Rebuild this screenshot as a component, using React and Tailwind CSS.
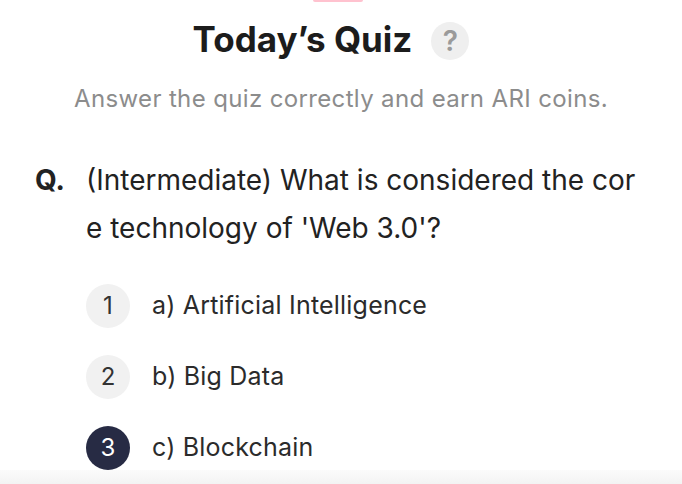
import React from 'react';

const options = [
  { n: 1, label: 'a) Artificial Intelligence' },
  { n: 2, label: 'b) Big Data' },
  { n: 3, label: 'c) Blockchain', active: true },
];

export default function App() {
  return (
    <div className="w-[682px] h-[484px] bg-white flex flex-col overflow-hidden font-['Inter',sans-serif]">
      <div className="self-center ml-[-6px] w-[50px] h-[2px] rounded-b-full bg-[#ffc2cf]" />

      {/* header */}
      <div className="flex items-center justify-center gap-[19px] mt-[16px] mr-[20px]">
        <h1 className="text-[35px] leading-[40px] font-bold text-[#1c1c1c]">Today’s Quiz</h1>
        <div className="w-[38px] h-[38px] rounded-full bg-[#efefef] flex items-center justify-center text-[28px] font-semibold text-[#9a9a9a] mt-[4px]">?</div>
      </div>
      <p className="mt-[24px] text-center text-[24px] leading-[30px] text-[#8c8c8c] tracking-[0.015em]">
        Answer the quiz correctly and earn ARI coins.
      </p>

      {/* question */}
      <div className="flex mt-[42px] pl-[35px] text-[28px] leading-[48px] text-[#222]">
        <span className="font-bold w-[51px] shrink-0">Q.</span>
        <p>
          (Intermediate) What is considered the cor<br />e technology of 'Web 3.0'?
        </p>
      </div>

      {/* options */}
      <div className="flex flex-col gap-[27px] mt-[32px] pl-[86px]">
        {options.map(o => (
          <div key={o.n} className="flex items-center gap-[22px]">
            <div
              className={
                o.active
                  ? 'w-[44px] h-[44px] rounded-full bg-[#272b44] text-white flex items-center justify-center text-[24px]'
                  : 'w-[44px] h-[44px] rounded-full bg-[#f1f1f1] text-[#333] flex items-center justify-center text-[24px]'
              }
            >
              {o.n}
            </div>
            <span className="text-[25px] text-[#2b2b2b] tracking-[0.008em]">{o.label}</span>
          </div>
        ))}
      </div>

      <div className="mt-auto h-[14px] bg-gradient-to-b from-[#fbfbfb] to-[#f3f3f3]" />
    </div>
  );
}
